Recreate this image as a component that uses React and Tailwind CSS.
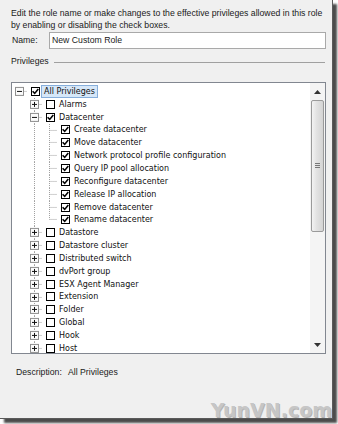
import React from "react";

const rows = [
  { level: 0, exp: "minus", checked: true, label: "All Privileges", sel: true },
  { level: 1, exp: "plus", checked: false, label: "Alarms" },
  { level: 1, exp: "minus", checked: true, label: "Datacenter" },
  { level: 2, checked: true, label: "Create datacenter" },
  { level: 2, checked: true, label: "Move datacenter" },
  { level: 2, checked: true, label: "Network protocol profile configuration" },
  { level: 2, checked: true, label: "Query IP pool allocation" },
  { level: 2, checked: true, label: "Reconfigure datacenter" },
  { level: 2, checked: true, label: "Release IP allocation" },
  { level: 2, checked: true, label: "Remove datacenter" },
  { level: 2, checked: true, label: "Rename datacenter", last: true },
  { level: 1, exp: "plus", checked: false, label: "Datastore" },
  { level: 1, exp: "plus", checked: false, label: "Datastore cluster" },
  { level: 1, exp: "plus", checked: false, label: "Distributed switch" },
  { level: 1, exp: "plus", checked: false, label: "dvPort group" },
  { level: 1, exp: "plus", checked: false, label: "ESX Agent Manager" },
  { level: 1, exp: "plus", checked: false, label: "Extension" },
  { level: 1, exp: "plus", checked: false, label: "Folder" },
  { level: 1, exp: "plus", checked: false, label: "Global" },
  { level: 1, exp: "plus", checked: false, label: "Hook" },
  { level: 1, exp: "plus", checked: false, label: "Host" },
];

const H = 12.85;
const C = H / 2;

function Cell({ vFull, vHalf, hLine, exp }) {
  return (
    <svg width="15" height={H} viewBox={`0 0 15 ${H}`} className="shrink-0 overflow-visible">
      {vFull && <line x1="7.5" y1="0" x2="7.5" y2={H} stroke="#a0a0a0" strokeDasharray="1 1" />}
      {vHalf && <line x1="7.5" y1="0" x2="7.5" y2={C} stroke="#a0a0a0" strokeDasharray="1 1" />}
      {hLine && <line x1="7.5" y1={C} x2="15" y2={C} stroke="#a0a0a0" strokeDasharray="1 1" />}
      {exp && (
        <g>
          <rect x="3.5" y={C - 4} width="8" height="8" fill="#fbfbfb" stroke="#8f8f8f" />
          <line x1="5" y1={C} x2="10" y2={C} stroke="#111" />
          {exp === "plus" && <line x1="7.5" y1={C - 2.5} x2="7.5" y2={C + 2.5} stroke="#111" />}
        </g>
      )}
    </svg>
  );
}

function Check({ checked }) {
  return (
    <span className="shrink-0 w-[9px] h-[9px] border-[1.3px] border-[#000] bg-white flex items-center justify-center">
      {checked && (
        <svg width="7" height="7" viewBox="0 0 7 7">
          <path d="M0.6 3.3 L2.7 5.4 L6.3 1.1" fill="none" stroke="#000" strokeWidth="1.6" />
        </svg>
      )}
    </span>
  );
}

function Row({ r }) {
  let cells = [];
  if (r.level === 0) {
    cells.push(<Cell key="a" hLine exp={r.exp} />);
  } else if (r.level === 1) {
    cells.push(<Cell key="a" />);
    cells.push(<Cell key="b" vFull hLine exp={r.exp} />);
  } else {
    cells.push(<Cell key="a" />);
    cells.push(<Cell key="b" vFull />);
    cells.push(<Cell key="c" vFull={!r.last} vHalf={r.last} hLine />);
  }
  return (
    <div className="flex items-center h-[12.85px]">
      {cells}
      <span className="ml-[4px]"><Check checked={r.checked} /></span>
      <span
        className={
          "ml-[1px] px-[2px] border leading-[11px] whitespace-nowrap " +
          (r.sel ? "bg-[#d6e7f8] border-[#86aedb]" : "border-transparent")
        }
      >
        {r.label}
      </span>
    </div>
  );
}

export default function App() {
  return (
    <div className="w-[338px] h-[424px] bg-white overflow-hidden">
      <div className="w-[333px] h-[419px] bg-[#f0f0f0] border-r border-b border-[#5a5a5a] shadow-[4px_4px_2px_rgba(0,0,0,0.7)] flex flex-col font-[Liberation_Sans,Arial,sans-serif] text-[8.7px] text-[#1a1a1a]">
        <div className="pt-[7px] pl-[11px] pr-[4px] leading-[12px] whitespace-nowrap">
          <p>Edit the role name or make changes to the effective privileges allowed in this role</p>
          <p>by enabling or disabling the check boxes.</p>
        </div>
        <div className="flex items-center mt-[1px] pl-[12px]">
          <span className="w-[37px]">Name:</span>
          <div className="w-[277px] h-[17px] border border-[#a9a9a9] bg-white flex items-center pl-[2px]">
            New Custom Role
          </div>
        </div>
        <div className="flex items-center mt-[7px] pl-[11px] h-[12px]">
          <span>Privileges</span>
          <div className="ml-[5px] w-[271px] h-px bg-[#a0a0a0]" />
        </div>
        <div className="mt-[14px] ml-[11px] w-[315px] h-[272px] border border-[#828790] bg-white flex">
          <div className="flex-1 pt-[2px] overflow-hidden font-[DejaVu_Sans,sans-serif] text-[8px] text-[#111]">
            {rows.map((r, i) => (
              <Row key={i} r={r} />
            ))}
          </div>
          <div className="w-[15px] bg-[#f4f4f4] flex flex-col items-center">
            <div className="h-[17px] flex items-center justify-center">
              <svg width="7" height="4" viewBox="0 0 7 4"><path d="M0 4 L3.5 0 L7 4 Z" fill="#333" /></svg>
            </div>
            <div className="w-[13px] h-[132px] rounded-[2px] border border-[#9a9a9a] bg-[linear-gradient(to_right,#f3f3f3,#e3e3e3_40%,#d4d4d4)] flex items-center justify-center">
              <svg width="5" height="6" viewBox="0 0 5 6">
                <path d="M0 0.5 H5 M0 2.5 H5 M0 4.5 H5" stroke="#777" strokeWidth="1" />
              </svg>
            </div>
            <div className="flex-1" />
            <div className="h-[17px] flex items-center justify-center">
              <svg width="7" height="4" viewBox="0 0 7 4"><path d="M0 0 L3.5 4 L7 0 Z" fill="#333" /></svg>
            </div>
          </div>
        </div>
        <div className="mt-[12px] pl-[16px] flex">
          <span className="w-[52px]">Description:</span>
          <span>All Privileges</span>
        </div>
        <div className="mt-auto self-end pr-0 font-[DejaVu_Sans,sans-serif] font-bold text-[19px] leading-[15px] tracking-[0px] text-[#c6c6c6] [text-shadow:1px_1px_0_#b5b5b5]">
          YunVN.com
        </div>
      </div>
    </div>
  );
}
